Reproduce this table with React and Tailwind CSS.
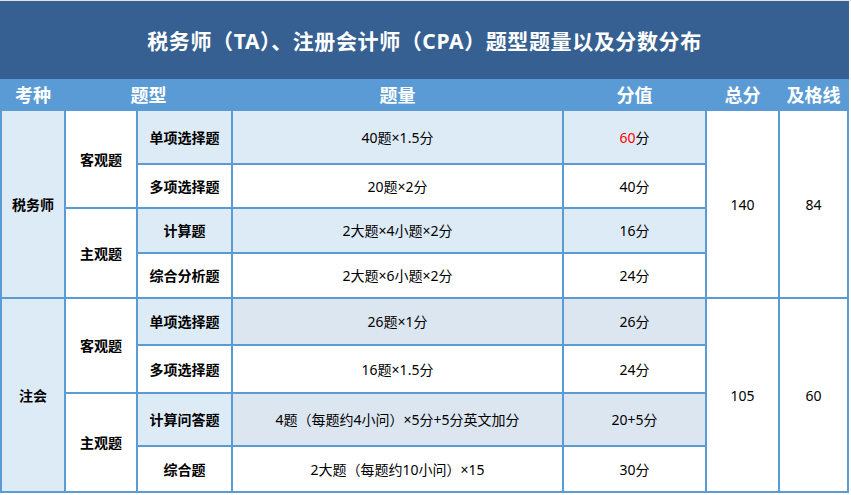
import React from 'react';

const LIGHT = 'bg-[#DDEBF7]';
const GRAY = 'bg-[#DCE6F1]';

const Cell = ({ className = '', bold, children }) => (
  <div className={`flex items-center justify-center text-[14px] text-black ${bold ? 'font-bold' : ''} ${className}`}>
    {children}
  </div>
);

const Head = ({ className = '', children }) => (
  <div className={`flex items-center justify-center text-[18px] font-bold text-white ${className}`}>{children}</div>
);

export default function App() {
  return (
    <div
      className="w-[851px] h-[495px] bg-white overflow-hidden"
      style={{ fontFamily: '"Noto Sans", "Noto Sans CJK SC", sans-serif' }}
    >
      <div className="h-px bg-[#e2e2e2]" />
      {/* Title band */}
      <div className="h-[78px] w-[849px] bg-[#366092] flex items-center justify-center pt-[3px]">
        <h1 className="text-[21px] font-bold text-white tracking-[0.6px]">
          税务师（TA）、注册会计师（CPA）题型题量以及分数分布
        </h1>
      </div>

      {/* Table */}
      <div className="grid w-[849px] grid-cols-[62px_70px_93px_329px_141px_71px_67px] grid-rows-[28px_52px_42px_43px_43px_45px_46px_51px_44px] gap-[2px] p-[2px] bg-[#5B9BD5]">
        <Head>考种</Head>
        <Head className="col-span-2">题型</Head>
        <Head>题量</Head>
        <Head>分值</Head>
        <Head>总分</Head>
        <Head>及格线</Head>

        {/* 税务师 */}
        <Cell bold className={`row-span-4 ${LIGHT}`}>税务师</Cell>
        <Cell bold className="row-span-2 bg-white">客观题</Cell>
        <Cell bold className={LIGHT}>单项选择题</Cell>
        <Cell className={LIGHT}>40题×1.5分</Cell>
        <Cell className={LIGHT}><span className="text-[#FF0000]">60</span>分</Cell>
        <Cell className="row-span-4 bg-white">140</Cell>
        <Cell className="row-span-4 bg-white">84</Cell>

        <Cell bold className="bg-white">多项选择题</Cell>
        <Cell className="bg-white">20题×2分</Cell>
        <Cell className="bg-white">40分</Cell>

        <Cell bold className="row-span-2 bg-white">主观题</Cell>
        <Cell bold className={LIGHT}>计算题</Cell>
        <Cell className={LIGHT}>2大题×4小题×2分</Cell>
        <Cell className={LIGHT}>16分</Cell>

        <Cell bold className="bg-white">综合分析题</Cell>
        <Cell className="bg-white">2大题×6小题×2分</Cell>
        <Cell className="bg-white">24分</Cell>

        {/* 注会 */}
        <Cell bold className={`row-span-4 ${LIGHT}`}>注会</Cell>
        <Cell bold className="row-span-2 bg-white">客观题</Cell>
        <Cell bold className={LIGHT}>单项选择题</Cell>
        <Cell className={GRAY}>26题×1分</Cell>
        <Cell className={GRAY}>26分</Cell>
        <Cell className="row-span-4 bg-white">105</Cell>
        <Cell className="row-span-4 bg-white">60</Cell>

        <Cell bold className="bg-white">多项选择题</Cell>
        <Cell className="bg-white">16题×1.5分</Cell>
        <Cell className="bg-white">24分</Cell>

        <Cell bold className="row-span-2 bg-white">主观题</Cell>
        <Cell bold className={LIGHT}>计算问答题</Cell>
        <Cell className={GRAY}>4题（每题约4小问）×5分+5分英文加分</Cell>
        <Cell className={GRAY}>20+5分</Cell>

        <Cell bold className="bg-white">综合题</Cell>
        <Cell className="bg-white">2大题（每题约10小问）×15</Cell>
        <Cell className="bg-white">30分</Cell>
      </div>
    </div>
  );
}
